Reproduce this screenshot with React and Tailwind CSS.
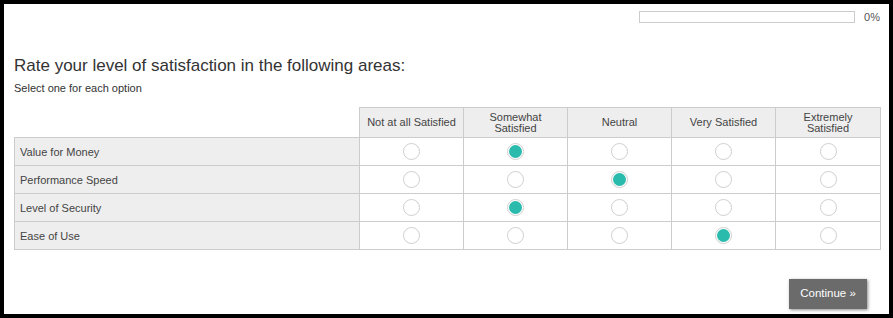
import React from "react";

const columns = [
    ["Not at all Satisfied"],
    ["Somewhat", "Satisfied"],
    ["Neutral"],
    ["Very Satisfied"],
    ["Extremely", "Satisfied"],
];

const rows = [
    { label: "Value for Money", value: 1 },
    { label: "Performance Speed", value: 2 },
    { label: "Level of Security", value: 1 },
    { label: "Ease of Use", value: 3 },
];

const Radio = ({ checked }) => (
    <div className="mx-auto flex h-[17px] w-[17px] items-center justify-center rounded-full border border-[#cfcfcf] bg-white">
        {checked && <div className="h-[13px] w-[13px] rounded-full bg-[#2bbbad]" />}
    </div>
);

const App = () => {
    return (
        <div
            className="box-border h-[318px] w-[893px] border-4 border-black bg-white pl-[10px] pr-[9px] pt-[7px] text-[#333]"
            style={{ fontFamily: '"Liberation Sans", Arial, sans-serif' }}
        >
            <div className="flex items-center justify-end gap-[9px]">
                <div className="h-[12px] w-[216px] border border-[#cccccc] bg-white" />
                <span className="text-[11px] leading-[12px] text-[#555]">0%</span>
            </div>

            <h2 className="mt-[33px] text-[17px] leading-[20px] text-[#333]">
                Rate your level of satisfaction in the following areas:
            </h2>
            <p className="mt-[5px] text-[11px] leading-[14px] text-[#333]">Select one for each option</p>

            <table className="mt-[12px] w-[866px] table-fixed border-collapse text-[11px] text-[#444]">
                <colgroup>
                    <col className="w-[345px]" />
                    <col className="w-[104px]" />
                    <col className="w-[104px]" />
                    <col className="w-[104px]" />
                    <col className="w-[104px]" />
                    <col className="w-[105px]" />
                </colgroup>
                <thead>
                    <tr className="h-[30px]">
                        <th className="border-0 p-0" />
                        {columns.map((lines, i) => (
                            <th
                                key={i}
                                className="border border-[#cccccc] bg-[#eeeeee] p-0 text-center text-[11px] font-normal leading-[11px]"
                            >
                                {lines.map((l) => (
                                    <div key={l}>{l}</div>
                                ))}
                            </th>
                        ))}
                    </tr>
                </thead>
                <tbody>
                    {rows.map((row) => (
                        <tr key={row.label} className="h-[28px]">
                            <td className="border border-[#cccccc] bg-[#eeeeee] pl-[5px] leading-[14px]">{row.label}</td>
                            {columns.map((_, i) => (
                                <td key={i} className="border border-[#cccccc] bg-white p-0">
                                    <Radio checked={row.value === i} />
                                </td>
                            ))}
                        </tr>
                    ))}
                </tbody>
            </table>

            <div className="mt-[29px] flex justify-end pr-[13px]">
                <button className="h-[30px] w-[78px] bg-[#6b6b6b] text-[11.5px] text-white shadow-[1px_1px_3px_rgba(0,0,0,0.45)]">
                    Continue »
                </button>
            </div>
        </div>
    );
};

export default App;
